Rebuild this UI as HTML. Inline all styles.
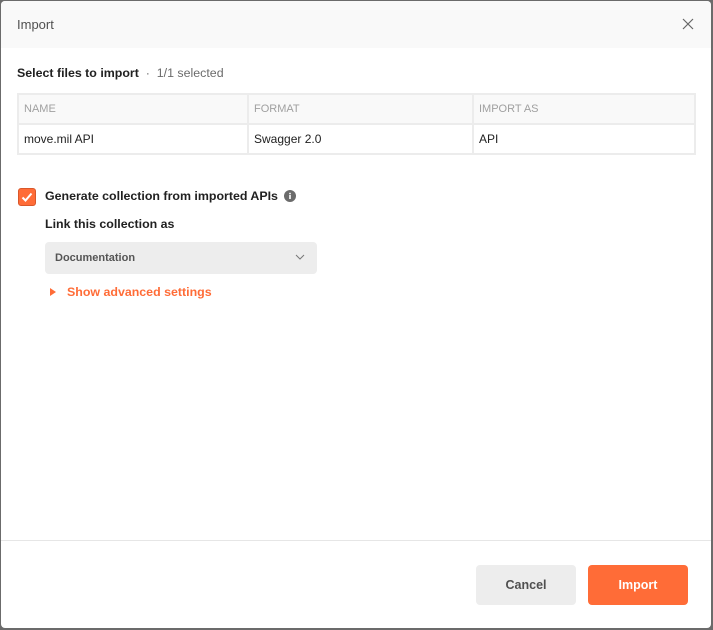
<!DOCTYPE html>
<html><head><style>
*{box-sizing:border-box;margin:0;padding:0}
body{width:713px;height:630px;background:#6b6b6b;font-family:"Liberation Sans",sans-serif;position:relative;overflow:hidden}
.d{position:absolute;left:1px;top:1px;width:710px;height:627px;background:#fff;border-radius:4px;overflow:hidden}
.h{height:47px;background:#f9f9f9;position:relative}
.h span{position:absolute;left:16px;top:16px;font-size:13px;color:#505050}
.x{position:absolute;right:17px;top:17px}
.t{position:absolute;font-size:12.4px;color:#212121;white-space:nowrap}
table{position:absolute;left:16px;top:92px;width:679px;border-collapse:collapse;font-size:12px}
td,th{border:2px solid #ececec;height:30px;padding:0 5px;text-align:left}
th{background:#f9f9f9;color:#a0a0a0;font-weight:normal;font-size:11px}
td{color:#212121}
.cb{position:absolute;left:17px;top:187px;width:18px;height:18px;background:#ff6c37;border-radius:3px;border:1px solid #d9572a}
.sel{position:absolute;width:272px;height:32px;background:#ededed;border-radius:4px;font-size:11px;color:#555;font-weight:bold;padding:10px 10px}
.btn{position:absolute;top:564px;width:100px;height:40px;border-radius:4px;font-size:12.5px;font-weight:bold;text-align:center;line-height:40px}
</style></head><body>
<div class="d">
<div class="h"><span>Import</span>
<svg class="x" width="12" height="12" viewBox="0 0 12 12"><path d="M1 1L11 11M11 1L1 11" stroke="#666" stroke-width="1.2"/></svg></div>
<div class="t" style="left:16px;top:65px;font-weight:bold">Select files to import <span style="font-weight:normal;color:#6b6b6b">&nbsp;·&nbsp; 1/1 selected</span></div>
<table>
<tr><th style="width:230px">NAME</th><th style="width:225px">FORMAT</th><th>IMPORT AS</th></tr>
<tr><td>move.mil API</td><td>Swagger 2.0</td><td>API</td></tr>
</table>
<div class="cb"><svg width="16" height="16" viewBox="0 0 16 16"><path d="M3.5 8.5L6.5 11.5L12.5 4.5" stroke="#fff" stroke-width="2" fill="none"/></svg></div>
<div class="t" style="left:44px;top:188px;font-weight:bold">Generate collection from imported APIs</div>
<svg style="position:absolute;left:283px;top:189px" width="12" height="12"><circle cx="6" cy="6" r="6" fill="#6b6b6b"/><rect x="5.2" y="5" width="1.6" height="4" fill="#fff"/><rect x="5.2" y="2.8" width="1.6" height="1.5" fill="#fff"/></svg>
<div class="t" style="left:44px;top:216px;font-weight:bold">Link this collection as</div>
<div class="sel" style="left:44px;top:241px">Documentation
<svg style="position:absolute;right:12px;top:12px" width="10" height="6"><path d="M1 1L5 5L9 1" stroke="#777" fill="none"/></svg></div>
<svg style="position:absolute;left:49px;top:287px" width="6" height="8"><path d="M0 0L6 4L0 8Z" fill="#ff6c37"/></svg>
<div class="t" style="left:66px;top:284px;font-weight:bold;color:#ff6c37">Show advanced settings</div>
<div style="position:absolute;left:0;top:539px;width:100%;height:1px;background:#e6e6e6"></div>
<div class="btn" style="left:475px;background:#ededed;color:#505050">Cancel</div>
<div class="btn" style="left:587px;background:#ff6c37;color:#fff">Import</div>
</div>
</body></html>
